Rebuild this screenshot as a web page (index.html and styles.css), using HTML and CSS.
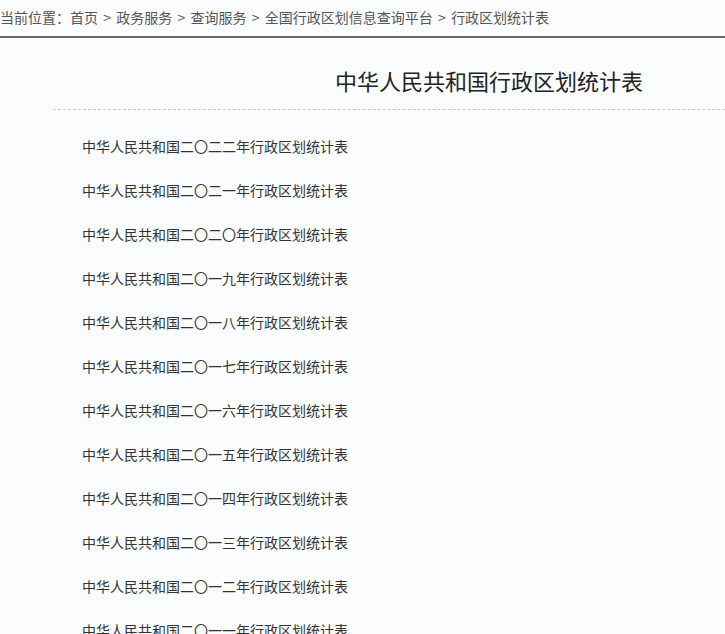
FILE: index.html
```html
<!DOCTYPE html>
<html lang="zh-CN">
<head>
  <meta charset="UTF-8"/>
  <title>行政区划统计表</title>
  <link rel="stylesheet" href="styles.css">
</head>
<body>
  <div class="crumbs">当前位置：<a href="#">首页</a><span class="sep">&gt;</span><a href="#">政务服务</a><span class="sep">&gt;</span><a href="#">查询服务</a><span class="sep">&gt;</span><a href="#">全国行政区划信息查询平台</a><span class="sep">&gt;</span><a href="#">行政区划统计表</a></div>
  <div class="content">
    <h1 class="page-title">中华人民共和国行政区划统计表</h1>
    <ul class="doc-list">
      <li><a href="#">中华人民共和国二〇二二年行政区划统计表</a></li>
      <li><a href="#">中华人民共和国二〇二一年行政区划统计表</a></li>
      <li><a href="#">中华人民共和国二〇二〇年行政区划统计表</a></li>
      <li><a href="#">中华人民共和国二〇一九年行政区划统计表</a></li>
      <li><a href="#">中华人民共和国二〇一八年行政区划统计表</a></li>
      <li><a href="#">中华人民共和国二〇一七年行政区划统计表</a></li>
      <li><a href="#">中华人民共和国二〇一六年行政区划统计表</a></li>
      <li><a href="#">中华人民共和国二〇一五年行政区划统计表</a></li>
      <li><a href="#">中华人民共和国二〇一四年行政区划统计表</a></li>
      <li><a href="#">中华人民共和国二〇一三年行政区划统计表</a></li>
      <li><a href="#">中华人民共和国二〇一二年行政区划统计表</a></li>
      <li><a href="#">中华人民共和国二〇一一年行政区划统计表</a></li>
      <li><a href="#">中华人民共和国二〇一〇年行政区划统计表</a></li>
      <li><a href="#">中华人民共和国二〇〇九年行政区划统计表</a></li>
    </ul>
  </div>
</body>
</html>
```

FILE: styles.css
```css
html { overflow-x: hidden; }
body { margin: 0; background: #fbfcfe; font-family: "Noto Sans CJK SC", "Liberation Sans", sans-serif; font-size: 14px; color: #333; }
a { color: inherit; text-decoration: none; }
.crumbs { height: 36px; line-height: 34px; color: #555; border-bottom: 2px solid #666; white-space: nowrap; }
.crumbs .sep { padding: 0 5.25px; }
.content { margin-left: 53px; width: 872px; }
.page-title { margin: 26px 0 0 0; padding-bottom: 13px; font-size: 22px; font-weight: normal; line-height: 32px; color: #222; text-align: center; border-bottom: 1px dashed #c8c8c8; }
.doc-list { list-style: none; margin: 0; padding: 14px 0 0 29px; }
.doc-list li { height: 44px; line-height: 44px; color: #333; }
```
